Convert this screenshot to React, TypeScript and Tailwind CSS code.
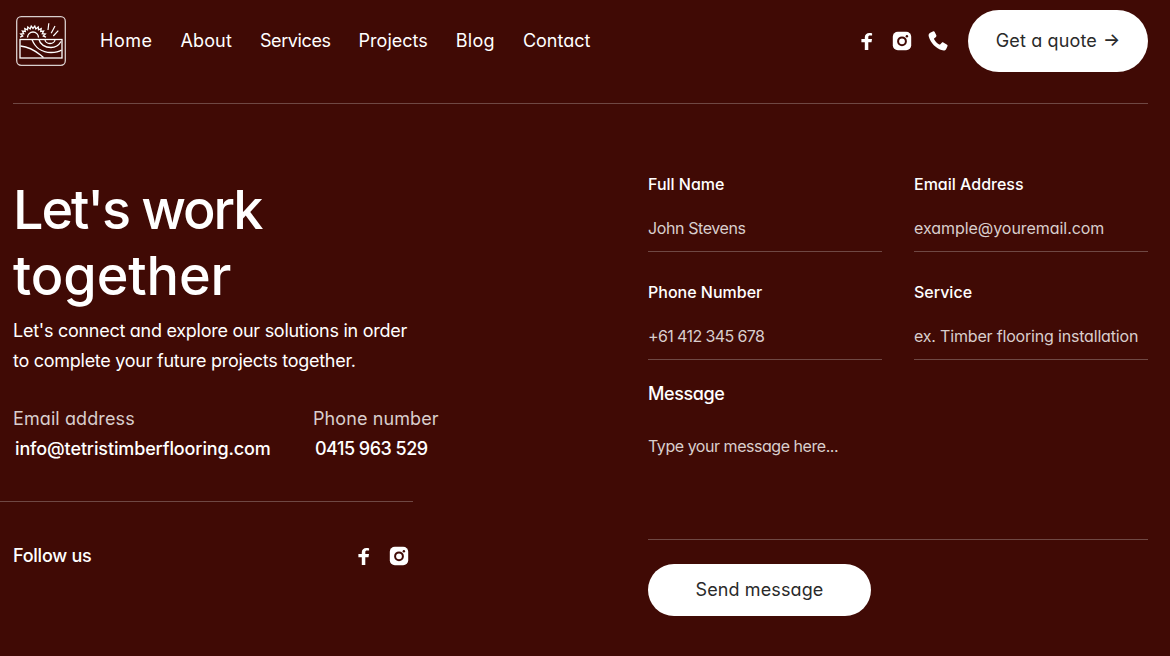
const F = ({ className = "" }: { className?: string }) => (
  <svg viewBox="0 0 20 20" className={className} fill="#fff">
    <path d="M12.300 19V11.300h3.200l.5-3.300h-3.700V6.100c0-1 .4-1.600 1.800-1.600H16.100V2.200C15.600 2.100 14.500 2 13.300 2 10.700 2 8.800 3.600 8.800 6.300V8H5.400v3.300h3.400V19z" />
  </svg>
);
const Ig = ({ className = "" }: { className?: string }) => (
  <svg viewBox="0 0 20 20" className={className}>
    <rect x="0.800" y="0.800" width="18.400" height="18.400" rx="5" fill="#fff" />
    <circle cx="10" cy="10.300" r="3.900" fill="none" stroke="#400a05" strokeWidth="2" />
    <circle cx="14.900" cy="5.200" r="1.200" fill="#400a05" />
  </svg>
);
const Phone = ({ className = "" }: { className?: string }) => (
  <svg viewBox="1 1 18 18" className={className} fill="#fff">
    <path d="M5.800 1.300 3 2.500C1.700 3.200 1.300 4.500 1.700 6c1.800 6 6.300 10.600 12.200 12.400 1.500.4 2.800 0 3.500-1.300l1.200-2.500c.2-.5.100-1-.4-1.300l-3.400-2c-.5-.3-1-.2-1.400.2l-1.300 1.500c-.3.300-.6.300-1 .2-2-1-3.600-2.700-4.600-4.700-.2-.4-.1-.7.200-1l1.500-1.200c.4-.4.500-.9.300-1.400L6.900 1.700c-.3-.5-.7-.6-1.100-.4z" />
  </svg>
);
const teeth = () => {
  const pts: string[] = [];
  const n = 11;
  for (let i = 0; i <= n; i++) {
    const a = Math.PI * (1.02 + (0.96 * i) / n);
    const b = a + (Math.PI * 0.96) / n / 2;
    pts.push(`${(17 + 13 * Math.cos(a)).toFixed(1)},${(22 + 12 * Math.sin(a)).toFixed(1)}`);
    if (i < n) pts.push(`${(17 + 10.500 * Math.cos(b)).toFixed(1)},${(22 + 9.500 * Math.sin(b)).toFixed(1)}`);
  }
  return pts.join(" ");
};
const Logo = () => (
  <svg viewBox="0 0 50 50" className="w-[50px] h-[50px]" fill="none" stroke="#fff">
    <rect x="0.700" y="0.700" width="48.600" height="48.600" rx="4.500" strokeWidth="1.300" stroke="#d9cecd" />
    <polyline points={teeth()} strokeWidth="1.300" />
    <path d="M11.500 21.500a5.500 5.500 0 0 1 11 0" strokeWidth="1.300" />
    <path d="M32.800 7.300 32 14M39 10l-3.800 7.300M42.300 14.700l-5 5.300" strokeWidth="1.200" />
    <rect x="4" y="23.500" width="42" height="18.500" strokeWidth="1.300" />
    <path d="M29 23.500a5 4 0 0 0 10 0M23 23.500c1 5 6 8 12 8 5 0 8-2.500 10-6M16 23.500c3 8 10 13 19 13 4 0 8-.8 10.500-2.500M4.500 30c9 1 15 5 20 9 1 .8 2 1.600 3 2.500" strokeWidth="1.300" />
  </svg>
);

const Field = ({ label, value, cls }: { label: string; value: string; cls: string }) => (
  <div className="flex flex-col h-[80px] border-b border-[#6f4844]">
    <label className="text-[16px] leading-[24px] font-medium text-white">{label}</label>
    <div className={`mt-[20px] text-[16px] leading-[24px] text-[#d9cecd] whitespace-nowrap ${cls}`}>{value}</div>
  </div>
);

export default function App() {
  return (
    <div className="w-[1170px] h-[656px] overflow-hidden bg-[#400a05] text-white font-['Inter',sans-serif] [font-feature-settings:'cv11']">
      <header className="ml-[13px] mr-[22px] h-[104px] border-b border-[#6f4844] flex items-start justify-between">
        <div className="flex items-center pt-[16px]">
          <div className="ml-[3px]"><Logo /></div>
          <nav className="ml-[34px] flex gap-[28px] text-[18px] leading-[28px]">
            <span className="tracking-[0.5px]">Home</span>
            <span className="tracking-[0.15px]">About</span>
            <span className="tracking-[-0.4px]">Services</span>
            <span className="tracking-[0px]">Projects</span>
            <span className="tracking-[0.3px]">Blog</span>
            <span className="tracking-[0px]">Contact</span>
          </nav>
        </div>
        <div className="flex items-center pt-[10px]">
          <F className="w-[20px] h-[20px]" />
          <Ig className="w-[20px] h-[20px] ml-[16px]" />
          <Phone className="w-[20px] h-[20px] ml-[16px]" />
          <button className="ml-[20px] w-[180px] h-[62px] pb-[2px] rounded-full bg-white text-[#2a2a2a] text-[18px] tracking-[0.15px] flex items-center justify-center gap-[6px]">
            Get a quote <span className="text-[18px] leading-[24px] font-medium">→</span>
          </button>
        </div>
      </header>
      <main className="flex justify-between pr-[22px]">
        <section className="w-[413px]">
          <div className="pl-[13px] pt-[73px]">
            <h1 className="text-[54px] leading-[66px] font-medium"><span className="tracking-[-2.1px]">Let's work</span><br /><span className="tracking-[-0.1px]">together</span></h1>
            <p className="text-[18px] leading-[30px] tracking-[-0.27px] mt-[7px]">Let's connect and explore our solutions in order<br />to complete your future projects together.</p>
            <div className="flex mt-[29px]">
              <div className="w-[300px] shrink-0">
                <div className="text-[18px] leading-[28px] text-[#d9cecd] tracking-[0.1px]">Email address</div>
                <div className="ml-[2px] mt-[2px] text-[18px] leading-[28px] font-medium tracking-[-0.13px] whitespace-nowrap">info@tetristimberflooring.com</div>
              </div>
              <div className="shrink-0">
                <div className="text-[18px] leading-[28px] text-[#d9cecd] tracking-[0.1px] whitespace-nowrap">Phone number</div>
                <div className="ml-[2px] mt-[2px] text-[18px] leading-[28px] font-medium tracking-[-0.5px]">0415 963 529</div>
              </div>
            </div>
          </div>
          <div className="mt-[38px] border-t border-[#6f4844] pl-[13px] pr-[4px] pt-[42px] flex items-center justify-between">
            <span className="text-[18px] leading-[24px] font-medium tracking-[-0.25px]">Follow us</span>
            <div className="flex items-center gap-[16px]">
              <F className="w-[20px] h-[20px]" />
              <Ig className="w-[20px] h-[20px]" />
            </div>
          </div>
        </section>
        <form className="w-[500px] pt-[68px]">
          <div className="grid grid-cols-2 gap-x-[32px] gap-y-[28px]">
            <Field label="Full Name" value="John Stevens" cls="tracking-[-0.4px]" />
            <Field label="Email Address" value="example@youremail.com" cls="tracking-[-0.05px]" />
            <Field label="Phone Number" value="+61 412 345 678" cls="tracking-[-0.6px]" />
            <Field label="Service" value="ex. Timber flooring installation" cls="tracking-[-0.18px]" />
          </div>
          <div className="mt-[20px] h-[160px] border-b border-[#6f4844]">
            <div className="text-[18px] leading-[28px] font-medium tracking-[-0.4px]">Message</div>
            <div className="mt-[26px] text-[16px] leading-[24px] text-[#d9cecd] tracking-[-0.46px]">Type your message here...</div>
          </div>
          <button className="mt-[24px] w-[223px] h-[52px] pb-[1px] rounded-full bg-white text-[#2a2a2a] text-[18px] tracking-[0.1px]">Send message</button>
        </form>
      </main>
    </div>
  );
}
